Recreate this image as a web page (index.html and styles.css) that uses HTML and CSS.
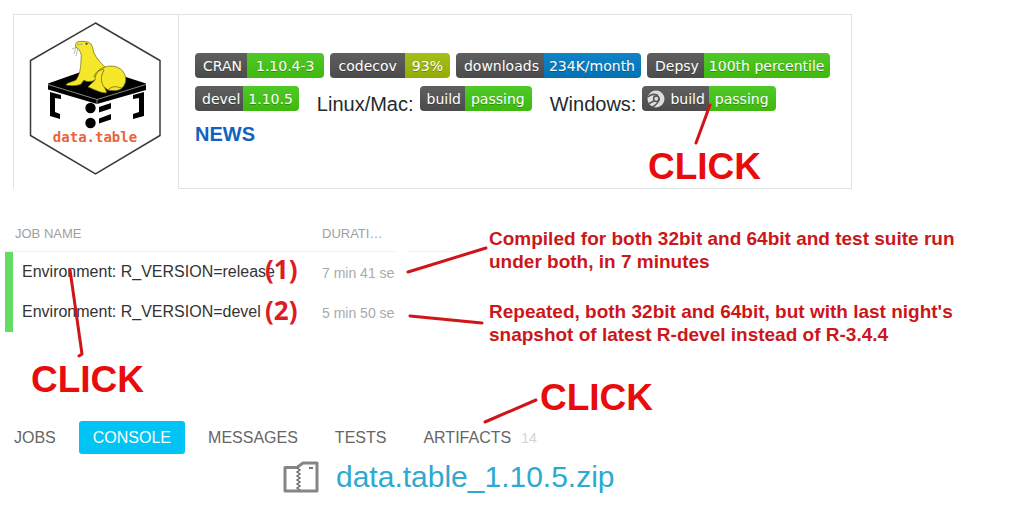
FILE: index.html
```html
<!DOCTYPE html>
<html lang="en">
<head>
<meta charset="utf-8">
<title>data.table builds</title>
<link rel="stylesheet" href="styles.css">
</head>
<body>
<main class="page">
  <header class="readme">
    <div class="readme-logo">
      <svg class="logo" viewBox="0 0 134 156" role="img" aria-label="data.table logo">
        <path d="M66.500 3 131 40.500V115.500L66.500 154 1.500 115.500V40.500Z" fill="#fff" stroke="#3a3a3a" stroke-width="1.500"/>
        <path d="M19 63.500 66 47 117 63.500V70L68 84 19 69.500Z" fill="#000"/>
        <path d="M19 64.500 68 79.500 117 64.500M68 79.500V84" fill="none" stroke="#aaa" stroke-width=".8"/>
        <path d="M21 72 32 75V79L26 78V92L31 94V99L21 96Z" fill="#000"/>
        <path d="M115 72 104 75V79L110 78V92L104 94V99L115 96Z" fill="#000"/>
        <circle cx="61.500" cy="88" r="5.200" fill="#000"/>
        <circle cx="61.500" cy="103" r="5.200" fill="#000"/>
        <path d="M70 87 82 83V88.500L70 92.500ZM70 98.500 82 94V99.500L70 103.500Z" fill="#000"/>
        <path d="M48 22C51 21 56 21 60 22.500C63 24 64 28 64.500 32C67 38 72 43 76 47C83 44.500 92 47 95 53C98 59 97 64 93 68C90 71 84 71 79 70L75 67C77 70 78 72 77 73C73 73 66 70 59 67C61 64 65 62 66 60C62 62 57 62 55 60L52 64C49 66 40 66 37 65C37 63 43 62 47 60C51 55 52 46 52 39C53 34 51 30 48 28C46 27 46 24 48 22Z" fill="#f5e72a" stroke="#6f6614" stroke-width=".7"/>
        <path d="M66 60C66 54 69 50 75 49M75 67C71 61 72 56 75 50M76 47C70 49 66 53 65 57M79 70C85 64 90 68 93 68" fill="none" stroke="#6f6614" stroke-width=".8"/>
        <path d="M48 25 54 24M47 27 45 34M49 28 47 36M48 27 43 29" fill="none" stroke="#888" stroke-width=".6"/>
        <circle cx="57.500" cy="23.800" r="1.100" fill="#4a4510"/>
        <text class="logo-text" x="66" y="122" text-anchor="middle">data.table</text>
      </svg>
    </div>
    <div class="readme-body">
      <div class="badges">
        <a class="badge" href="#cran"><span class="key">CRAN</span><span class="value green wide">1.10.4-3</span></a>
        <a class="badge roomy" href="#codecov"><span class="key">codecov</span><span class="value olive">93%</span></a>
        <a class="badge" href="#downloads"><span class="key">downloads</span><span class="value blue">234K/month</span></a>
        <a class="badge" href="#depsy"><span class="key">Depsy</span><span class="value green">100th percentile</span></a>
      </div>
      <div class="badges">
        <a class="badge compact" href="#devel"><span class="key">devel</span><span class="value green">1.10.5</span></a>
        <span class="platform">Linux/Mac:</span>
        <a class="badge build" href="#travis"><span class="key">build</span><span class="value green">passing</span></a>
        <span class="platform">Windows:</span>
        <a class="badge build" href="#appveyor"><span class="key"><svg class="av" viewBox="0 0 18 18" aria-hidden="true"><circle cx="9" cy="9" r="8.500" fill="#ddd"/><circle cx="9.300" cy="8.800" r="2.700" fill="none" stroke="#555" stroke-width="1.500"/><path d="M1 7C4 4 8 4 11 5.500M12.300 8C12 12 9 15 5.500 17M7 11 2 13.500" fill="none" stroke="#555" stroke-width="1.500"/></svg>build</span><span class="value green">passing</span></a>
      </div>
      <a class="news" href="#news">NEWS</a>
    </div>
  </header>

  <section class="builds">
    <table class="jobs">
      <thead>
        <tr><th class="name" scope="col">JOB NAME</th><th class="time" scope="col">DURATI…</th></tr>
      </thead>
      <tbody>
        <tr><td class="name">Environment: R_VERSION=release</td><td class="time">7 min 41 sec</td></tr>
        <tr><td class="name">Environment: R_VERSION=devel</td><td class="time">5 min 50 sec</td></tr>
      </tbody>
    </table>
    <div class="notes">
      <p class="note">Compiled for both 32bit and 64bit and test suite run<br>under both, in 7 minutes</p>
      <p class="note">Repeated, both 32bit and 64bit, but with last night's<br>snapshot of latest R-devel instead of R-3.4.4</p>
    </div>
  </section>

  <nav class="tabs">
    <button class="tab" type="button">JOBS</button>
    <button class="tab active" type="button">CONSOLE</button>
    <button class="tab" type="button">MESSAGES</button>
    <button class="tab" type="button">TESTS</button>
    <button class="tab" type="button">ARTIFACTS<span class="count">14</span></button>
  </nav>

  <div class="artifact">
    <svg class="zip" viewBox="0 0 36 32" aria-hidden="true">
      <path d="M2 6.500H14L20 2H34V30H2Z" fill="#fff" stroke="#858585" stroke-width="3" stroke-linejoin="round"/>
      <path d="M14 7 17 9 14 11 17 13 14 15 17 17 14 19 17 21 14 23 17 25 14 27 17 29" fill="none" stroke="#666" stroke-width="1.400"/>
      <path d="M26 6H30V8H26Z" fill="#777"/>
    </svg>
    <a class="file" href="#zip">data.table_1.10.5.zip</a>
  </div>

  <svg class="pointers" width="1024" height="512" aria-hidden="true">
    <path class="rule" d="M408 251.500H462"/>
    <path d="M710 105 696 143M70 270 82 354 79 356M408 272 486 248M410 316 482 323M485 422 536 400"/>
  </svg>
  <span class="mark click-build">CLICK</span>
  <span class="mark click-job">CLICK</span>
  <span class="mark click-artifacts">CLICK</span>
  <span class="mark number first">(1)</span>
  <span class="mark number second">(2)</span>
</main>
</body>
</html>
```
FILE: styles.css
```css
* { box-sizing: border-box; }
body { margin: 0; background: #fff; color: #24292e; font-family: "Liberation Sans", Arial, sans-serif; }
a { text-decoration: none; }
.page { position: relative; padding: 14px 5px 8px; }

.readme { display: flex; max-width: 839px; margin-left: 8px; border-top: 1px solid #dfe2e5; }
.readme-logo { width: 165px; padding: 5px 0 0 15px; border-left: 1px solid #dfe2e5; }
.logo { display: block; width: 134px; height: 156px; }
.logo-text { font: bold 14px "DejaVu Sans Mono", monospace; fill: #e8633a; }
.readme-body { flex: 1; padding: 38px 16px 39px; border: 1px solid #dfe2e5; border-top: 0; }
.badges { display: flex; align-items: flex-end; gap: 6px; height: 25px; margin-bottom: 8px; white-space: nowrap; }
.badge { display: flex; height: 25px; border-radius: 4px; overflow: hidden; color: #fff; font: 14px/26px "DejaVu Sans", sans-serif; text-shadow: 0 1px #0004; }
.key { display: flex; align-items: center; gap: 5px; padding: 0 5px 0 8px; background: linear-gradient(#5f5f5f, #4b4b4b); }
.value { padding: 0 6px 0 5px; }
.wide { padding: 0 9px; }
.roomy .key { padding: 0 8px 0 9px; }
.roomy .value { padding: 0 7px; }
.compact .key { padding: 0 3px 0 7px; }
.build .key { padding: 0 4px 0 7px; }
.build .value { padding: 0 7px 0 6px; }
.green { background: linear-gradient(#4fc927, #3fb90f); }
.olive { background: linear-gradient(#a5bf1b, #93ab06); }
.blue { background: linear-gradient(#1184c6, #0271b1); }
.av { width: 18px; height: 18px; margin-left: -2px; }
.platform { font-size: 20px; line-height: 13px; margin-left: 12px; }
.news { display: flex; color: #1162c0; font-size: 20px; font-weight: bold; line-height: 30px; }

.builds { display: flex; align-items: flex-start; margin-top: 30px; }
.jobs { width: 390px; table-layout: fixed; border-spacing: 0; }
.jobs th { height: 33px; padding: 0 0 3px; color: #a0a0a0; font-size: 13px; font-weight: normal; text-align: left; border-bottom: 1px solid #eee; }
.jobs td { height: 40px; padding: 0; white-space: nowrap; overflow: hidden; }
.jobs .name { width: 317px; }
.jobs th.name { padding-left: 10px; }
.jobs td.name { padding-left: 9px; border-left: 8px solid #62dc62; color: #333; font-size: 16px; }
.jobs td.time { padding-top: 2px; color: #aaa; font-size: 14px; }
.notes { display: flex; flex-direction: column; gap: 27px; padding: 8px 0 0 94px; }
.note { margin: 0; color: #cb171a; font-size: 19px; font-weight: bold; line-height: 23px; white-space: nowrap; }

.tabs { display: flex; gap: 9px; margin-top: 75px; margin-left: -5px; }
.tab { height: 33px; padding: 0 14px; border: 0; border-radius: 3px; background: none; color: #666; font: 16px "Liberation Sans", Arial, sans-serif; }
.tab.active { background: #00c4f4; color: #fff; }
.count { margin-left: 10px; color: #d4d4d4; font-size: 14px; }
.artifact { display: flex; align-items: center; gap: 17px; margin: 5px 0 0 278px; }
.zip { width: 36px; height: 32px; }
.file { color: #2ea9d0; font-size: 30px; line-height: 36px; }

.pointers { position: absolute; left: 0; top: 0; fill: none; stroke: #cf1518; stroke-width: 3; stroke-linecap: round; stroke-linejoin: round; pointer-events: none; }
.rule { stroke: #f2efef; stroke-width: 1; }
.mark { position: absolute; color: #e80c0c; font-size: 37px; font-weight: bold; line-height: 44px; }
.click-build { left: 648px; top: 145px; }
.click-job { left: 31px; top: 358px; }
.click-artifacts { left: 540px; top: 376px; }
.number { left: 265px; color: #dc1c24; font: bold 26px/26px "Noto Sans", "Open Sans", sans-serif; }
.first { top: 256px; }
.second { top: 297px; }
```
